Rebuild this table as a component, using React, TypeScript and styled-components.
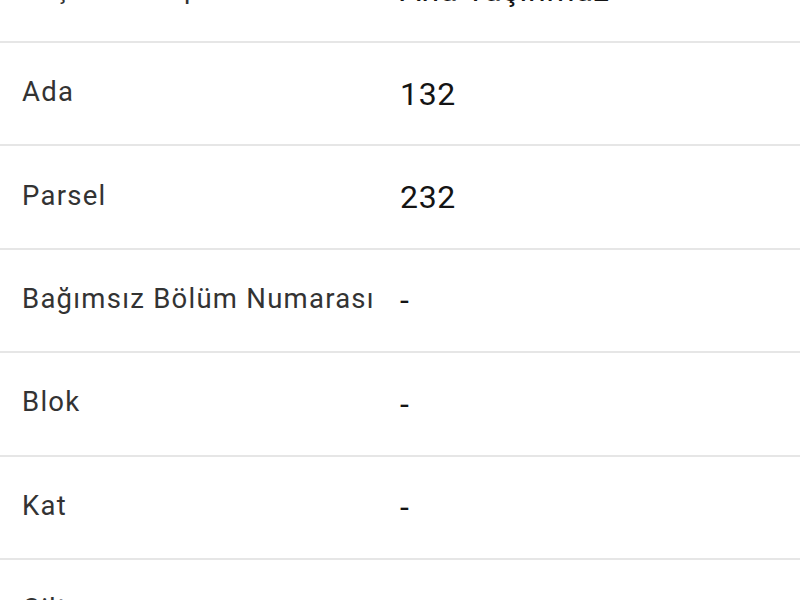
import React from "react";
import styled, { createGlobalStyle } from "styled-components";

const GlobalStyle = createGlobalStyle`
  html, body {
    margin: 0;
    padding: 0;
    background: #ffffff;
    overflow: hidden;
  }
  body {
    font-family: Roboto, "Noto Sans", "Liberation Sans", sans-serif;
  }
`;

const List = styled.div`
  display: flex;
  flex-direction: column;
  margin-top: -60.4px;
  width: 800px;
`;

const Row = styled.div`
  display: grid;
  grid-template-columns: 378px 1fr;
  align-items: center;
  height: 101.4px;
  padding-left: 22px;
  border-bottom: 2px solid #e6e6e6;
  box-sizing: content-box;
`;

const Label = styled.div`
  font-size: 27.5px;
  letter-spacing: 1.25px;
  color: #333333;
  padding-bottom: 4px;
  white-space: nowrap;
`;

const Value = styled.div`
  font-size: 32px;
  letter-spacing: 0.7px;
  color: #141414;
  white-space: nowrap;
`;

const rows: { label: string; value: string }[] = [
  { label: "Taşınmaz Tipi", value: "Ana Taşınmaz" },
  { label: "Ada", value: "132" },
  { label: "Parsel", value: "232" },
  { label: "Bağımsız Bölüm Numarası", value: "-" },
  { label: "Blok", value: "-" },
  { label: "Kat", value: "-" },
  { label: "Cilt", value: "-" },
];

export default function App() {
  return (
    <>
      <GlobalStyle />
      <List>
        {rows.map((r) => (
          <Row key={r.label}>
            <Label>{r.label}</Label>
            <Value>{r.value}</Value>
          </Row>
        ))}
      </List>
    </>
  );
}
